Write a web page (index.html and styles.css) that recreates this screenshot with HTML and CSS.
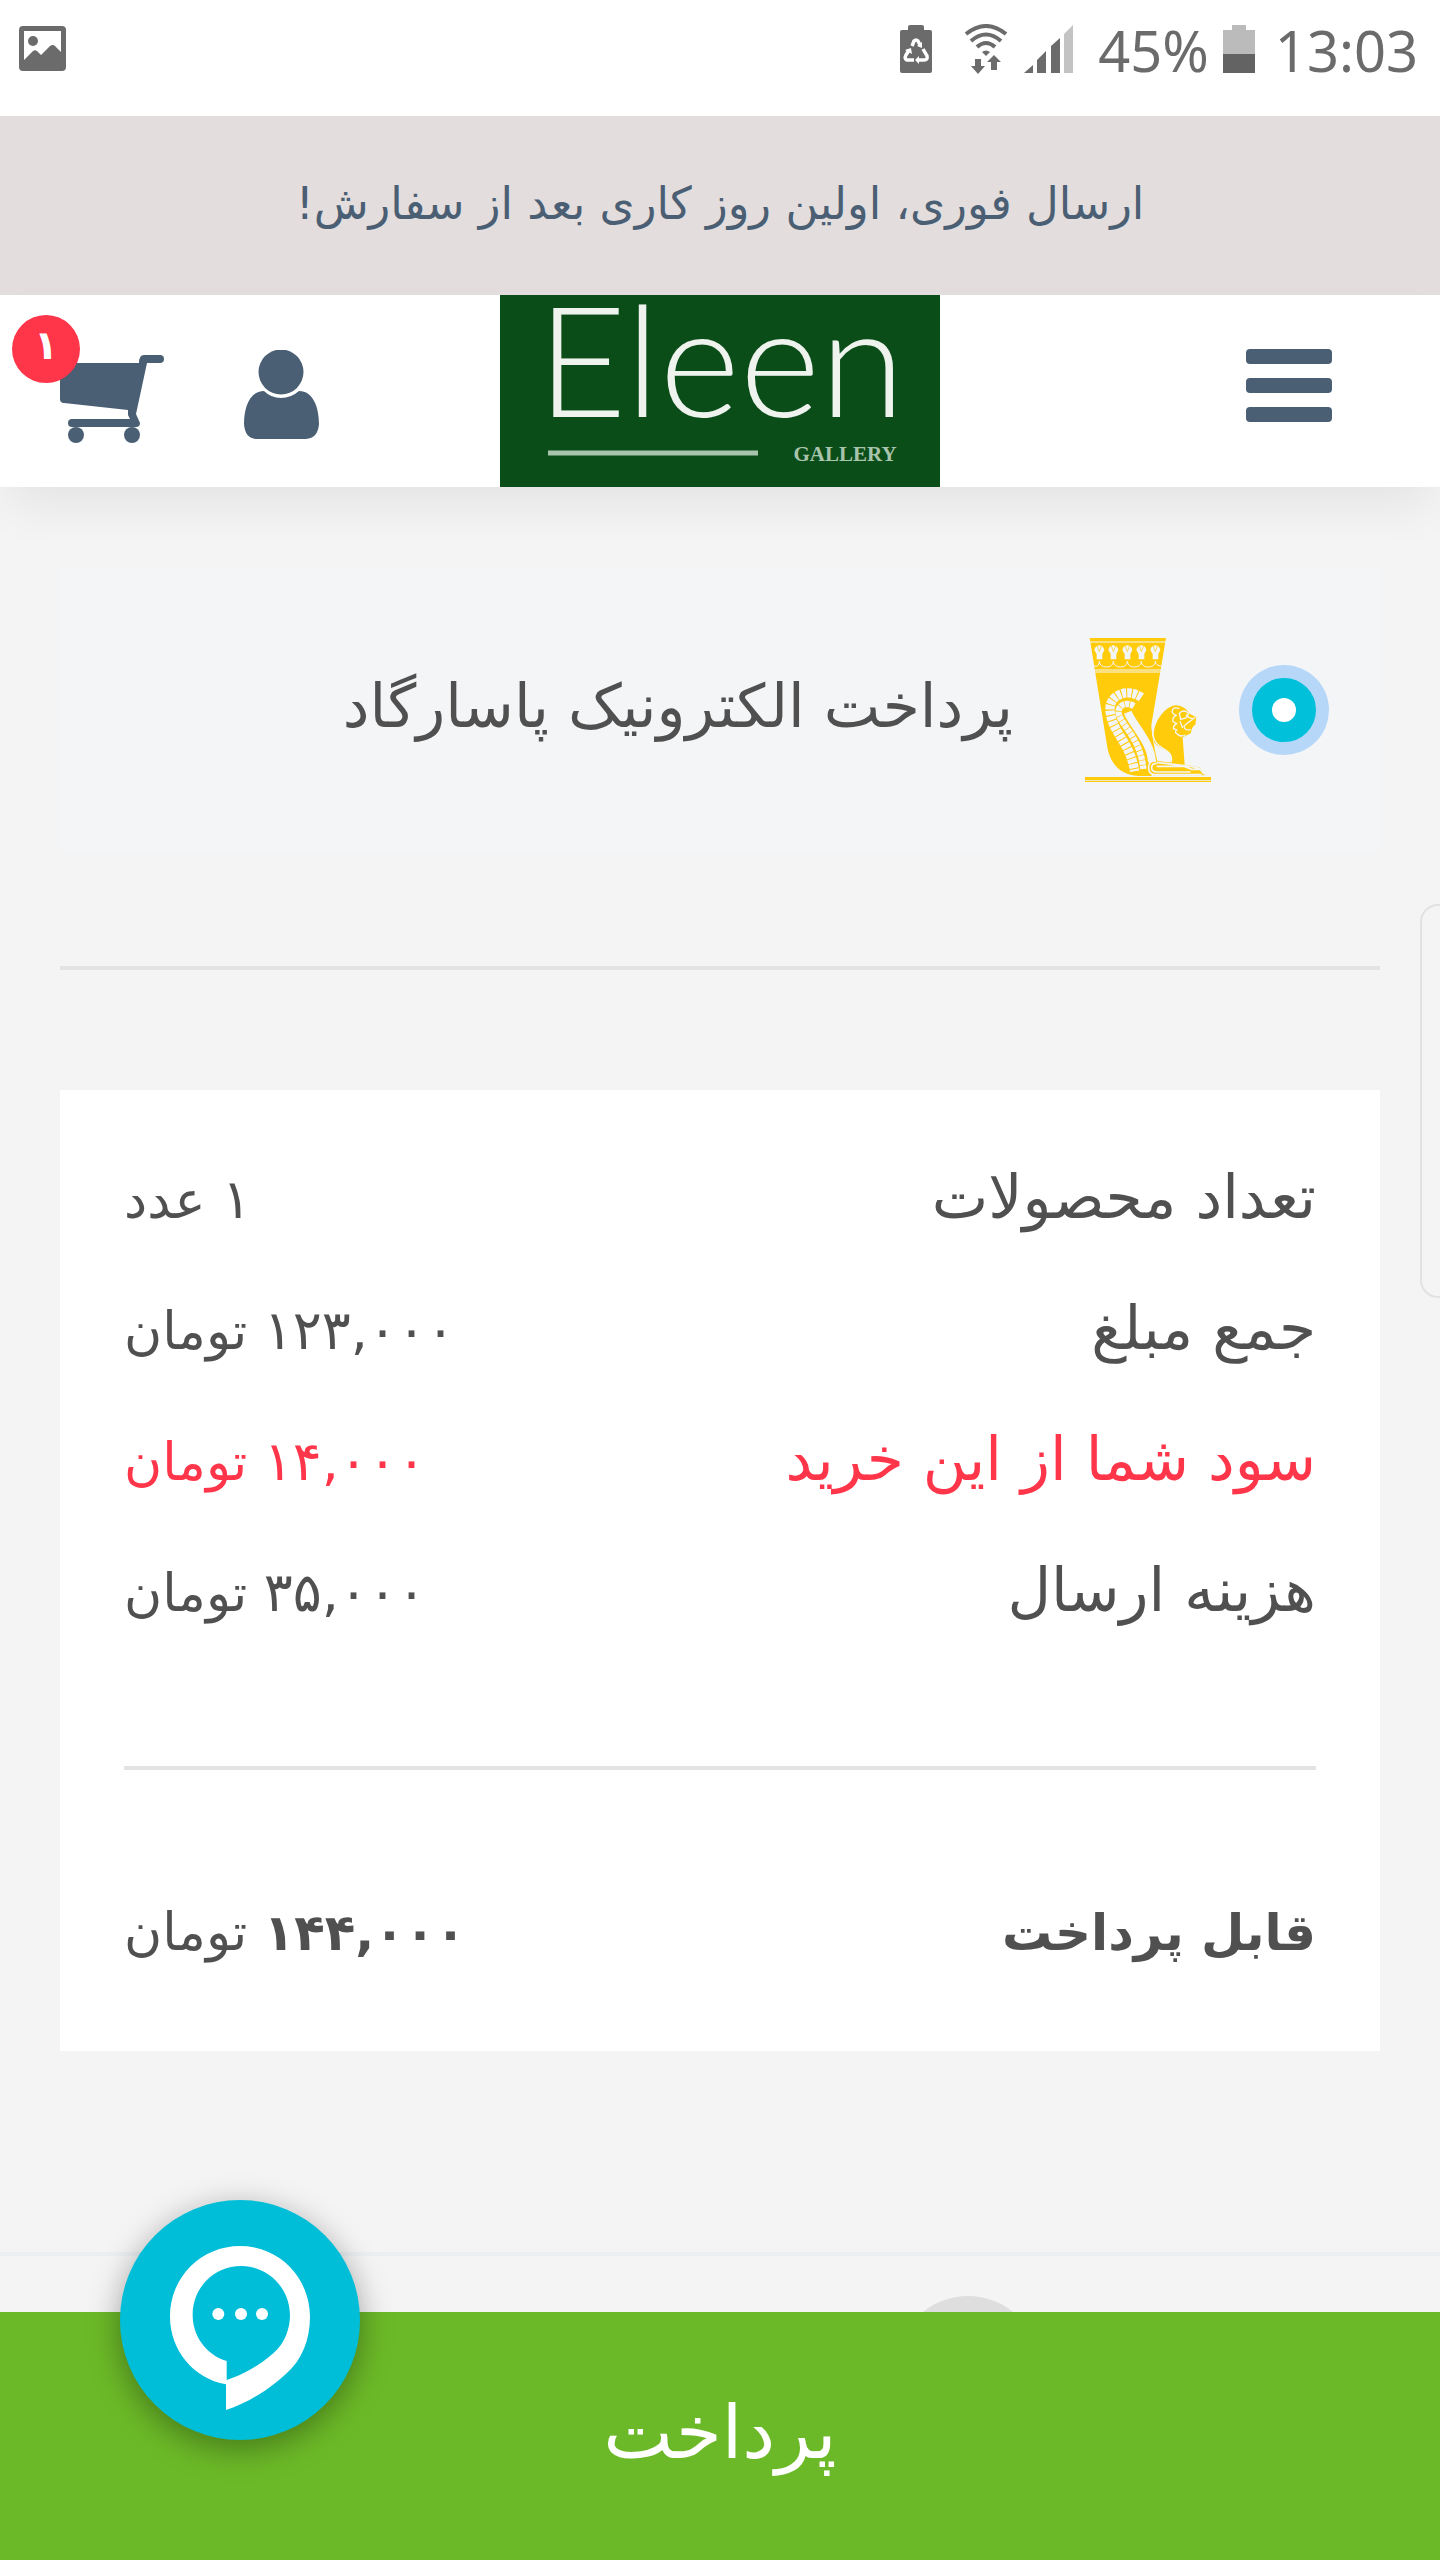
FILE: index.html
```html
<!DOCTYPE html>
<html lang="fa" dir="rtl">
<head>
<meta charset="utf-8">
<meta name="viewport" content="width=device-width, initial-scale=1">
<title>Eleen Gallery</title>
<link rel="stylesheet" href="styles.css">
</head>
<body>
<div class="status" dir="ltr">
  <svg class="status-picture" width="48" height="46" viewBox="0 0 48 46" aria-hidden="true">
    <path fill="#6b6b6b" fill-rule="evenodd" d="M4 0H43Q47 0 47 4V41Q47 45 43 45H4Q0 45 0 41V4Q0 0 4 0ZM5 5V34L14 25Q16 23.500 18 25L22 29L31 20Q34 18 36 20L42 26V5Z"/>
    <circle cx="14" cy="15" r="5" fill="#6b6b6b"/>
  </svg>
  <svg width="32" height="48" viewBox="0 0 32 48" aria-hidden="true">
    <path fill="#6b6b6b" d="M10 0H22Q24 0 24 2V5H30Q32 5 32 7V46Q32 48 30 48H2Q0 48 0 46V7Q0 5 2 5H8V2Q8 0 10 0Z"/>
    <g fill="none" stroke="#fff" stroke-width="3.500"><path d="M12 21L14 16Q16 14 18 16L20 20M23 24L27 31Q28 35 24 35H18M14 35H7Q4 34 6 30L9 25"/></g>
    <path fill="#fff" d="M22 17V23L17 21ZM19 31V39L15 35ZM5 25L11 23L12 29Z"/>
  </svg>
  <svg class="status-wifi" width="44" height="50" viewBox="0 0 44 50" aria-hidden="true">
    <g fill="none" stroke="#6b6b6b" stroke-width="4"><path d="M2 10Q22-6 42 10M7 17Q22 4 37 17M13 23Q22 15 31 23"/></g>
    <path fill="#6b6b6b" d="M18 28Q22 25 26 28L22 32ZM11 35H17V42H21L14 50L7 42H11ZM27 46V38H23L30 31L37 38H33V46Z"/>
  </svg>
  <svg class="status-signal" width="50" height="48" viewBox="0 0 50 48" aria-hidden="true">
    <path fill="#6b6b6b" d="M0 48L9 40V48ZM13 48V35L22 26V48ZM27 48V21L36 13V48Z"/><path fill="#c3c3c3" d="M40 48V9L49 0V48Z"/>
  </svg>
  <span>45%</span>
  <svg width="32" height="48" viewBox="0 0 32 48" aria-hidden="true"><path fill="#bbb" d="M9 0H23V5H32V30H0V5H9Z"/><path fill="#636363" d="M0 29H32V48H0Z"/></svg>
  <span class="status-clock">13:03</span>
</div>

<p class="promo">ارسال فوری، اولین روز کاری بعد از سفارش!</p>

<header class="header">
  <button class="menu" type="button" aria-label="منو"><span></span><span></span><span></span></button>
  <a class="logo" href="#" aria-label="Eleen Gallery">
    <svg viewBox="0 0 440 192" width="440" height="192" direction="ltr">
      <rect width="440" height="192" fill="#0b4d19"/>
      <text class="logo-name" x="221" y="122" text-anchor="middle">Eleen</text>
      <path d="M48 158H258" stroke="#a9c4ad" stroke-width="5"/>
      <text class="logo-sub" x="345" y="166" text-anchor="middle">GALLERY</text>
    </svg>
  </a>
  <nav class="tools">
    <a href="#" aria-label="حساب کاربری">
      <svg width="75" height="90" viewBox="0 0 75 90" aria-hidden="true" fill="#4b5f74">
        <circle cx="37" cy="22" r="22.500"/>
        <path d="M20 41C6 41 0 57 0 74Q1 89 13 89H62Q74 88 75 74C75 57 69 41 55 41Q47 48 37 48Q27 48 20 41Z"/>
      </svg>
    </a>
    <a class="cart" href="#" aria-label="سبد خرید">
      <svg width="104" height="88" viewBox="0 0 104 88" aria-hidden="true" fill="#4b5f74">
        <path d="M0 8H79Q79 0 84 0H100Q104 0 104 4T100 8H87L76 59L80 68Q80 72 76 72H12Q8 72 8 68T12 64H70L68 60V55L4 48Q0 48 0 44Z"/>
        <circle cx="16" cy="80" r="8"/><circle cx="72" cy="80" r="8"/>
      </svg>
      <span class="badge">۱</span>
    </a>
  </nav>
</header>

<main class="main">
  <label class="method">
    <input type="radio" name="gateway" checked>
    <svg width="126" height="144" viewBox="135 114 378 432" aria-hidden="true">
      <g fill="#ffcb0a">
        <path d="M149 114H378L334 375Q338 425 352 484L330 500L335 528H295C240 525 207 490 200 430Z"/>
        <path d="M342 425C333 370 375 318 408 316Q435 318 450 342L469 352L466 374Q455 380 452 400L428 412L434 495L390 488C410 452 355 450 342 425Z"/>
        <path d="M135 531H513V540H135ZM135 542H513V546H135Z"/>
        <path d="M325 500Q326 482 350 482L455 497L480 503L495 526H340Q325 522 325 500Z"/>
      </g>
      <g fill="none" stroke="#f3f5f7">
        <path stroke-width="3" d="M148 126H378M162 210H364M164 216H362"/>
        <path stroke-width="3" d="M162 198Q177 202 178 184Q180 201 199 201Q219 201 220 184Q222 201 241 201Q261 201 262 184Q264 201 283 201Q303 201 304 184Q306 201 325 201Q345 201 346 184Q348 198 364 198"/>
        <path stroke-width="28" stroke-dasharray="13 3" d="M304 292C262 262 206 286 210 332C216 398 270 425 284 514"/>
        <path stroke-width="19" stroke-dasharray="13 2" d="M282 318C250 300 225 325 240 352C256 386 303 425 310 507"/>
        <path stroke-width="24" d="M263 337C278 375 333 425 336 486"/>
        <path stroke-width="4" d="M337 378C334 465 402 432 394 487"/>
        <path stroke-width="5" d="M348 482Q324 482 326 506Q328 524 346 524H485M350 490Q334 490 335 505Q337 516 352 516H452M350 499H430L456 508H484M350 487L456 500L480 506L492 523"/>
        <path stroke-width="4" d="M418 326Q398 318 396 336Q400 344 410 346Q396 350 399 365L410 371Q398 378 401 386L410 390Q402 397 412 402Q420 412 436 405M418 340Q430 326 446 340L438 354L422 358ZM466 352L444 368L432 378Q434 394 452 388M438 344L446 352L458 356M420 364L428 384"/>
      </g>
      <g fill="#f3f5f7">
        <path id="lotus" d="M163 150Q166 137 178 136Q190 137 193 150L187 162V178H170V162Z"/>
        <use href="#lotus" x="42"/><use href="#lotus" x="84"/><use href="#lotus" x="126"/><use href="#lotus" x="168"/>
      </g>
      <path fill="none" stroke="#ffcb0a" stroke-width="2" d="M171 136L178 155L185 136M213 136L220 155L227 136M255 136L262 155L269 136M297 136L304 155L311 136M339 136L346 155L353 136"/>
    </svg>
    <span class="method-name">پرداخت الکترونیک پاسارگاد</span>
  </label>

  <hr class="rule">

  <section class="card">
    <dl class="rows">
      <div><dt>تعداد محصولات</dt><dd><b>۱</b> عدد</dd></div>
      <div><dt>جمع مبلغ</dt><dd><b>۱۲۳,۰۰۰</b> تومان</dd></div>
      <div class="saving"><dt>سود شما از این خرید</dt><dd><b>۱۴,۰۰۰</b> تومان</dd></div>
      <div><dt>هزینه ارسال</dt><dd><b>۳۵,۰۰۰</b> تومان</dd></div>
    </dl>
    <hr class="rule">
    <dl class="rows">
      <div class="total"><dt>قابل پرداخت</dt><dd><b>۱۴۴,۰۰۰</b> تومان</dd></div>
    </dl>
  </section>
</main>

<footer class="footer"><span class="footer-dot"></span></footer>

<button class="pay" type="button">پرداخت</button>
<button class="chat" type="button" aria-label="گفتگو">
  <svg width="140" height="164" viewBox="330 258 420 492" aria-hidden="true" fill="#fff">
    <path fill-rule="evenodd" d="M498 750V673C400 655 330 570 330 470C330 350 425 258 540 258C660 258 750 355 750 470C750 540 725 600 680 640C625 692 560 730 498 750ZM500 660C550 645 600 615 640 580C675 550 690 505 690 465C690 385 625 318 543 318C460 318 398 385 398 465C398 530 440 585 500 603Z"/>
    <circle cx="475" cy="462" r="18"/><circle cx="543" cy="462" r="18"/><circle cx="606" cy="462" r="18"/>
  </svg>
</button>
<span class="edge-handle"></span>
</body>
</html>
```
FILE: styles.css
```css
* { box-sizing: border-box; }

body {
  margin: 0;
  min-height: 100vh;
  display: flex;
  flex-direction: column;
  background: #f4f4f4;
  color: #505050;
  font-family: "DejaVu Sans", sans-serif;
  overflow-x: hidden;
}

svg { display: block; flex: none; }
a { color: inherit; text-decoration: none; }
button { border: 0; padding: 0; font: inherit; color: inherit; cursor: pointer; }

.status {
  display: flex;
  align-items: center;
  height: 116px;
  padding: 0 22px 18px 19px;
  background: #fff;
  color: #6b6b6b;
  font: 56px/80px "Noto Sans", sans-serif;
}
.status-picture { margin-right: auto; }
.status-wifi { margin: 0 16px 0 32px; }
.status-signal { margin-right: 24px; }
.status-clock { margin-left: 20px; }
.status span { padding-top: 2px; }
.status span + svg { margin-left: 14px; }

.promo {
  margin: 0;
  padding: 48px 24px 51px;
  background: #e3dddd;
  color: #4b5f74;
  font-size: 45px;
  line-height: 80px;
  text-align: center;
}

.header {
  position: relative;
  display: grid;
  grid-template-columns: 1fr auto 1fr;
  align-items: center;
  background: #fff;
  box-shadow: 0 24px 48px -8px rgba(0, 0, 0, .07);
}
.menu {
  display: grid;
  gap: 14px;
  width: 86px;
  margin: 0 108px 12px 0;
  background: none;
}
.menu span { height: 15px; border-radius: 4px; background: #4b5f74; }
.logo-name { font: 300 154px "Lato", sans-serif; fill: #eef3ee; }
.logo-sub { font: 700 21px "Liberation Serif", serif; fill: #a9c4ad; }
.tools {
  display: flex;
  justify-content: flex-end;
  align-items: center;
  gap: 80px;
  padding: 8px 0 0 60px;
}
.cart { position: relative; padding-top: 8px; }
.badge {
  position: absolute;
  left: -48px;
  top: -32px;
  width: 68px;
  height: 68px;
  border-radius: 50%;
  background: #ff354a;
  color: #fff;
  font-size: 40px;
  font-weight: 700;
  line-height: 60px;
  text-align: center;
}

.main { padding: 80px 60px 201px; }

.method {
  display: flex;
  align-items: center;
  height: 286px;
  padding: 0 64px;
  background: #f3f5f7;
}
.method input {
  appearance: none;
  flex: none;
  width: 64px;
  height: 64px;
  margin: 0 0 0 41px;
  border: 20px solid #00c0da;
  border-radius: 50%;
  background: #fff;
  box-shadow: 0 0 0 13px #b7d7f9;
}
.method-name {
  margin-right: 72px;
  padding-bottom: 8px;
  font-size: 60px;
  line-height: 80px;
}

.rule { width: 100%; height: 4px; margin: 0; border: 0; background: #e3e3e3; }
.main > .rule { margin: 113px 0 120px; }

.card { padding: 45px 64px 50px; background: #fff; }
.rows { margin: 0; }
.rows div {
  display: flex;
  justify-content: space-between;
  align-items: baseline;
  height: 131px;
  padding-top: 22px;
  line-height: 80px;
}
.rows dt { font-size: 60px; }
.rows dd { margin: 0; font-size: 52px; }
.rows b { font-size: 54px; font-weight: 400; }
.rows .saving { color: #ff354a; }
.rows .total dt, .rows .total b { font-size: 50px; font-weight: 700; }
.card .rule { margin: 107px 0 100px; }

.footer {
  flex: 1;
  max-height: 303px;
  padding: 40px 400px 0;
  border-top: 4px solid #ebeff2;
}
.footer-dot { display: block; width: 144px; height: 144px; border-radius: 50%; background: #dedede; }

.pay {
  position: fixed;
  inset: auto 0 0;
  height: 248px;
  padding-bottom: 8px;
  background: #6bb928;
  color: #fff;
  font-size: 74px;
}
.chat {
  position: fixed;
  left: 120px;
  bottom: 120px;
  display: grid;
  place-items: center;
  width: 240px;
  height: 240px;
  padding-top: 16px;
  border-radius: 50%;
  background: #00bdd8;
  box-shadow: 0 8px 32px rgba(0, 0, 0, .35);
}
.edge-handle {
  position: fixed;
  right: 0;
  top: 904px;
  width: 20px;
  height: 394px;
  border: 2px solid #e2e2e2;
  border-right: 0;
  border-radius: 18px 0 0 18px;
}
```
